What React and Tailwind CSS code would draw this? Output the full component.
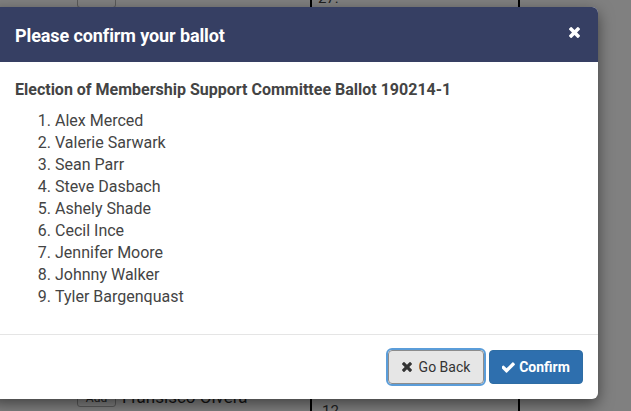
import React from "react";

const items = [
  "Alex Merced",
  "Valerie Sarwark",
  "Sean Parr",
  "Steve Dasbach",
  "Ashely Shade",
  "Cecil Ince",
  "Jennifer Moore",
  "Johnny Walker",
  "Tyler Bargenquast",
];

function TimesIcon({ className }) {
  return (
    <svg className={className} viewBox="110 366 1188 1188" fill="currentColor" aria-hidden="true">
      <path d="M1298 1322q0 40-28 68l-136 136q-28 28-68 28t-68-28l-294-294-294 294q-28 28-68 28t-68-28l-136-136q-28-28-28-68t28-68l294-294-294-294q-28-28-28-68t28-68l136-136q28-28 68-28t68 28l294 294 294-294q28-28 68-28t68 28l136 136q28 28 28 68t-28 68l-294 294 294 294q28 28 28 68z" />
    </svg>
  );
}

function CheckIcon({ className }) {
  return (
    <svg className={className} viewBox="200 300 1480 1240" fill="currentColor" aria-hidden="true">
      <path d="M1671 566q0 40-28 68l-724 724-136 136q-28 28-68 28t-68-28l-136-136-362-362q-28-28-28-68t28-68l136-136q28-28 68-28t68 28l294 295 656-657q28-28 68-28t68 28l136 136q28 28 28 68z" />
    </svg>
  );
}

export default function App() {
  return (
    <div
      className="relative w-[631px] h-[411px] overflow-hidden bg-[#808080]"
      style={{ fontFamily: "Roboto, 'Liberation Sans', sans-serif" }}
    >
      {/* dimmed page behind the overlay */}
      <div className="flex flex-col justify-between h-full">
        <div className="flex h-[8px] items-end">
          <div className="ml-[77px] w-[39px] h-[26px] shrink-0 border border-[#5a5a5a] rounded-[3px]" />
          <div className="ml-[194px] w-[2px] h-[30px] bg-black shrink-0" />
          <div className="ml-[6px] text-[15px] leading-[20px] text-[#202020] w-[200px] self-end">27.</div>
          <div className="w-[2px] h-[30px] bg-black shrink-0" />
        </div>
        <div className="flex h-[24px] items-start">
          <div className="ml-[77px] w-[39px] h-[20px] shrink-0 border border-[#5a5a5a] rounded-[3px] text-[12px] text-[#202020] flex justify-center pt-[1px]">Add</div>
          <div className="ml-[6px] w-[188px] text-[17px] leading-[20px] text-[#151515]">Fransisco Olvera</div>
          <div className="w-[2px] h-[24px] bg-black shrink-0" />
          <div className="ml-[10px] w-[196px] text-[15px] leading-[20px] pt-[14px] text-[#202020]">12</div>
          <div className="w-[2px] h-[24px] bg-black shrink-0" />
        </div>
      </div>

      {/* modal */}
      <div className="absolute left-[-10px] top-[7px] w-[608px] rounded-[6px] overflow-hidden bg-white shadow-[0_5px_15px_rgba(0,0,0,0.5)]">
        <div className="h-[55px] bg-[#363f63] flex items-center justify-between pl-[25px] pr-[18px]">
          <h4 className="text-white text-[18px] font-bold tracking-[-0.1px] mt-[2px]">Please confirm your ballot</h4>
          <TimesIcon className="text-white w-[11px] h-[11px] mb-[5px]" />
        </div>
        <div className="pl-[25px] pr-[15px] pt-[17px] pb-[26px] text-[#444]">
          <div className="text-[16px] leading-[22px] font-bold">
            Election of Membership Support Committee Ballot 190214-1
          </div>
          <ol className="list-decimal pl-[40px] mt-[9px] text-[16px] leading-[22px]">
            {items.map((n) => (
              <li key={n}>{n}</li>
            ))}
          </ol>
        </div>
        <div className="border-t border-[#e5e5e5] flex justify-end gap-[5px] px-[15px] py-[15px]">
          <button className="h-[34px] w-[96px] flex items-center justify-center gap-[7px] bg-[#e6e6e6] border border-[#8c8c8c] rounded-[4px] text-[#333] text-[14px] outline-2 outline-[#5b9dd9] outline-offset-0">
            <TimesIcon className="w-[10px] h-[10px]" />
            Go Back
          </button>
          <button className="h-[34px] w-[94px] flex items-center justify-center gap-[4px] bg-[#2e6fae] border border-[#2e6da4] rounded-[4px] text-white text-[14px] font-bold">
            <CheckIcon className="w-[13px] h-[11px]" />
            Confirm
          </button>
        </div>
      </div>
    </div>
  );
}
